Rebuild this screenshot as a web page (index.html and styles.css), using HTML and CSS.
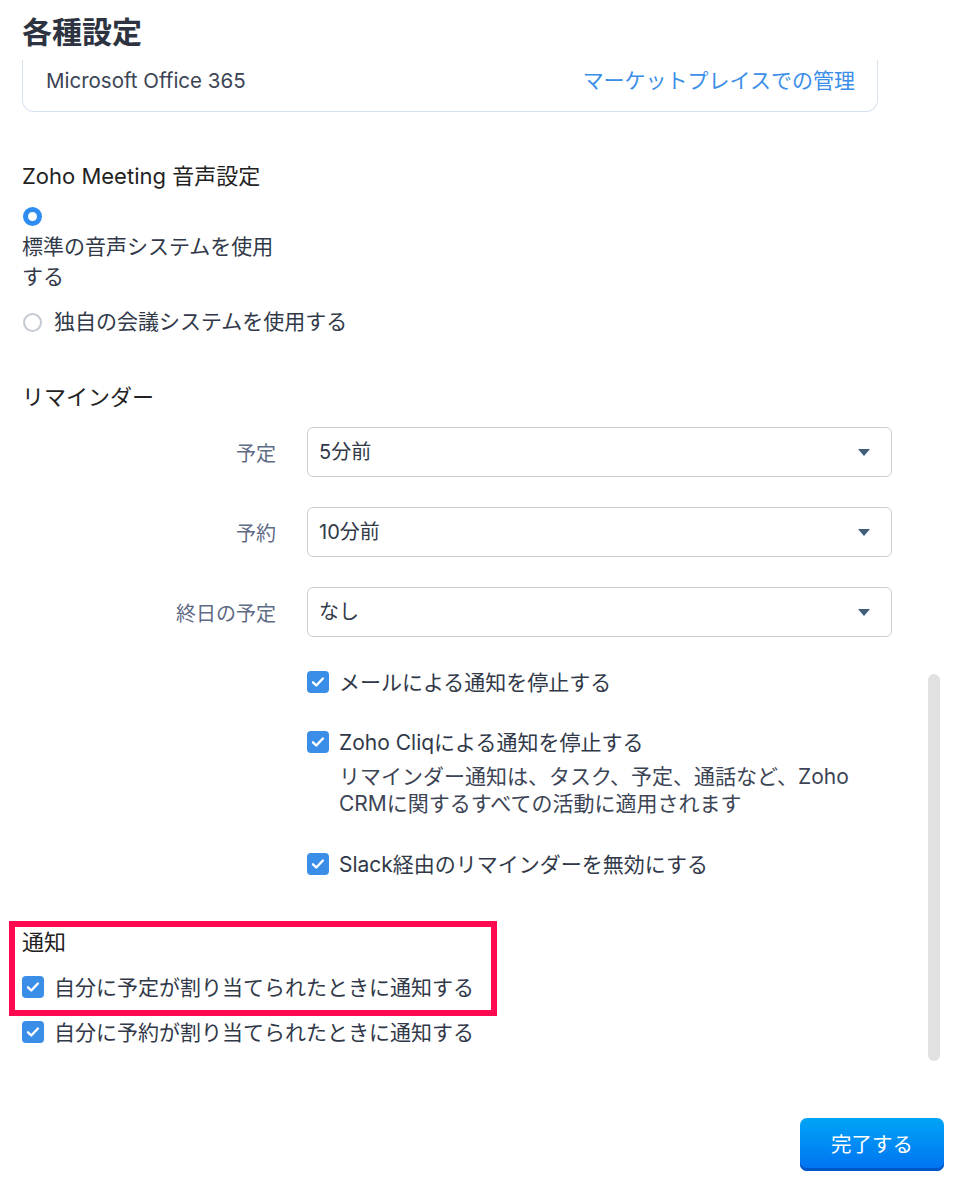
FILE: index.html
```html
<!DOCTYPE html>
<html lang="ja">
<head>
<meta charset="utf-8">
<title>各種設定</title>
<link rel="stylesheet" href="styles.css">
</head>
<body>
<div class="page">
  <header class="header"><h1 class="title">各種設定</h1></header>

  <div class="card">
    <span class="card-name">Microsoft Office 365</span>
    <a class="card-link" href="#">マーケットプレイスでの管理</a>
  </div>

  <section class="sec sec-meeting">
    <h2 class="sec-title">Zoho Meeting 音声設定</h2>
    <label class="radio-opt narrow">
      <span class="radio on"></span>
      <span class="opt-text">標準の音声システムを使用する</span>
    </label>
    <label class="radio-opt">
      <span class="radio"></span>
      <span class="opt-text">独自の会議システムを使用する</span>
    </label>
  </section>

  <section class="sec sec-remind">
    <h2 class="sec-title">リマインダー</h2>
    <div class="field">
      <span class="field-label">予定</span>
      <div class="select"><span>5分前</span><span class="caret"></span></div>
    </div>
    <div class="field">
      <span class="field-label">予約</span>
      <div class="select"><span>10分前</span><span class="caret"></span></div>
    </div>
    <div class="field">
      <span class="field-label">終日の予定</span>
      <div class="select"><span>なし</span><span class="caret"></span></div>
    </div>

    <div class="checks">
      <div class="check-row">
        <span class="cb"><svg viewBox="0 0 22 22" width="22" height="22"><path d="M6 11.3l3.3 3.2 6.6-7" fill="none" stroke="#fff" stroke-width="2.4" stroke-linecap="round" stroke-linejoin="round"/></svg></span>
        <span class="opt-text">メールによる通知を停止する</span>
      </div>
      <div class="check-row">
        <span class="cb"><svg viewBox="0 0 22 22" width="22" height="22"><path d="M6 11.3l3.3 3.2 6.6-7" fill="none" stroke="#fff" stroke-width="2.4" stroke-linecap="round" stroke-linejoin="round"/></svg></span>
        <div class="check-body">
          <span class="opt-text">Zoho Cliqによる通知を停止する</span>
          <p class="desc">リマインダー通知は、タスク、予定、通話など、Zoho CRMに関するすべての活動に適用されます</p>
        </div>
      </div>
      <div class="check-row">
        <span class="cb"><svg viewBox="0 0 22 22" width="22" height="22"><path d="M6 11.3l3.3 3.2 6.6-7" fill="none" stroke="#fff" stroke-width="2.4" stroke-linecap="round" stroke-linejoin="round"/></svg></span>
        <span class="opt-text">Slack経由のリマインダーを無効にする</span>
      </div>
    </div>
  </section>

  <section class="sec sec-notify">
    <div class="highlight">
      <h2 class="sec-title">通知</h2>
      <div class="check-row">
        <span class="cb"><svg viewBox="0 0 22 22" width="22" height="22"><path d="M6 11.3l3.3 3.2 6.6-7" fill="none" stroke="#fff" stroke-width="2.4" stroke-linecap="round" stroke-linejoin="round"/></svg></span>
        <span class="opt-text">自分に予定が割り当てられたときに通知する</span>
      </div>
    </div>
    <div class="check-row">
      <span class="cb"><svg viewBox="0 0 22 22" width="22" height="22"><path d="M6 11.3l3.3 3.2 6.6-7" fill="none" stroke="#fff" stroke-width="2.4" stroke-linecap="round" stroke-linejoin="round"/></svg></span>
      <span class="opt-text">自分に予約が割り当てられたときに通知する</span>
    </div>
  </section>

  <div class="footer">
    <button class="btn" type="button">完了する</button>
  </div>

  <div class="scrollbar"></div>
</div>
</body>
</html>
```

FILE: styles.css
```css
* { box-sizing: border-box; }
html, body { margin: 0; padding: 0; background: #fff; }
body {
  font-family: "Inter", "Noto Sans CJK JP", sans-serif;
  color: #313949;
  font-size: 21px;
}
.page {
  position: relative;
  width: 960px;
  height: 1182px;
  padding-left: 22px;
  overflow: hidden;
}
.header { padding: 12px 0 8px; }
.title {
  margin: 0;
  font-size: 30px;
  line-height: 40px;
  font-weight: 700;
  color: #2d3340;
}
.card {
  width: 856px;
  height: 52px;
  border: 1px solid #d8e2ee;
  border-top: none;
  border-radius: 0 0 12px 12px;
  display: flex;
  justify-content: space-between;
  align-items: flex-start;
  padding: 6px 22px 0 23px;
}
.card-name, .card-link { line-height: 30px; }
.card-name { color: #3c4455; font-size: 20.5px; }
.card-link { color: #3a8ee8; text-decoration: none; font-size: 21px; }

.sec-title {
  margin: 0;
  font-size: 22px;
  line-height: 30px;
  font-weight: 400;
  color: #222;
}
.sec-meeting { margin-top: 49px; }
.radio-opt {
  display: flex;
  align-items: center;
  gap: 12px;
  line-height: 30px;
}
.radio-opt.narrow {
  flex-wrap: wrap;
  width: 270px;
  margin-top: 16px;
  row-gap: 0;
}
.radio-opt.narrow .radio { margin: 0 0 6px 1px; }
.radio-opt + .radio-opt { margin-top: 15px; }
.radio {
  flex: none;
  width: 19px;
  height: 19px;
  border-radius: 50%;
  border: 2px solid #c5cad2;
  background: #fff;
  margin-left: 1px;
}
.radio.on { border: 5px solid #2f8cf0; }
.opt-text { line-height: 30px; color: #313949; }

.sec-remind { margin-top: 45px; }
.field {
  display: flex;
  align-items: center;
  margin-top: 30px;
}
.sec-remind .sec-title + .field { margin-top: 15px; }
.field-label {
  width: 254px;
  text-align: right;
  color: #5e6b85;
  font-size: 20px;
  margin-right: 31px;
}
.select {
  width: 585px;
  height: 50px;
  border: 1px solid #c9cdd3;
  border-radius: 6px;
  display: flex;
  align-items: center;
  justify-content: space-between;
  padding: 0 21px 3px 11px;
  color: #313949;
  font-size: 20px;
}
.caret {
  width: 0;
  height: 0;
  border-left: 6px solid transparent;
  border-right: 6px solid transparent;
  border-top: 7px solid #3f5d78;
  margin-top: 3px;
}
.checks { margin-left: 285px; margin-top: 31px; }
.check-row {
  display: flex;
  align-items: flex-start;
  gap: 10px;
}
.checks .check-row + .check-row { margin-top: 30px; }
.checks .check-row:last-child { margin-top: 33px; }
.cb {
  flex: none;
  width: 22px;
  height: 22px;
  border-radius: 4px;
  background: #3a8ee8;
  margin-top: 3px;
  display: block;
}
.cb svg { display: block; }
.desc {
  margin: 5px 0 0;
  line-height: 27px;
  width: 520px;
  color: #3c4455;
}

.sec-notify { margin-top: 41px; }
.highlight {
  margin-left: -13px;
  width: 488px;
  border: 6px solid #ff0a50;
  padding: 0 0 7px 7px;
}
.highlight .check-row { margin-top: 16px; }
.highlight + .check-row { margin-top: 2px; }

.footer {
  display: flex;
  justify-content: flex-end;
  padding-right: 16px;
  margin-top: 70px;
}
.btn {
  width: 144px;
  height: 53px;
  border: none;
  border-radius: 7px;
  background: linear-gradient(#00a4f6, #0072f2);
  box-shadow: inset 0 -3px 0 #0058c8;
  color: #fff;
  font-family: "Noto Sans CJK JP", sans-serif;
  font-size: 20.5px;
  padding: 0 0 3px;
}
.scrollbar {
  position: absolute;
  left: 928px;
  top: 674px;
  width: 12px;
  height: 387px;
  border-radius: 6px;
  background: #e1e1e1;
}
```
